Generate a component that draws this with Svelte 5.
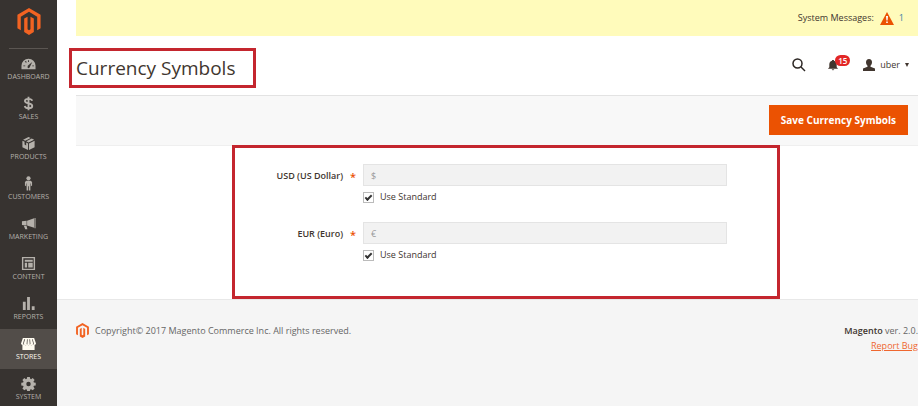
<script lang="ts">
	interface MenuItem {
		id: string;
		label: string;
		active?: boolean;
	}

	interface Currency {
		code: string;
		name: string;
		symbol: string;
		standard: boolean;
	}

	const menu: MenuItem[] = [
		{ id: 'dashboard', label: 'Dashboard' },
		{ id: 'sales', label: 'Sales' },
		{ id: 'products', label: 'Products' },
		{ id: 'customers', label: 'Customers' },
		{ id: 'marketing', label: 'Marketing' },
		{ id: 'content', label: 'Content' },
		{ id: 'reports', label: 'Reports' },
		{ id: 'stores', label: 'Stores', active: true },
		{ id: 'system', label: 'System' }
	];

	let currencies: Currency[] = $state([
		{ code: 'USD', name: 'US Dollar', symbol: '$', standard: true },
		{ code: 'EUR', name: 'Euro', symbol: '€', standard: true }
	]);
</script>

{#snippet logo()}
	<svg class="logo" viewBox="0 0 24 28" aria-hidden="true">
		<path d="M12 0 24 7v14l-3.500 2V9L12 4 3.500 9v14L0 21V7z" />
		<path d="M7 11l3.500-2v13l1.500 1 1.500-1V9L17 11v14l-5 3-5-3z" />
	</svg>
{/snippet}

{#snippet icon(id: string)}
	<svg class="icon" viewBox="0 0 16 16" aria-hidden="true">
		{#if id === 'dashboard'}
			<path
				fill-rule="evenodd"
				d="M.5 14V10.500a7.500 7.500 0 0 1 15 0V14zM7 12.300a1.300 1.300 0 0 0 2 .3L12 6.300 7.200 10.500zM2.500 10h2v1h-2zM4 6l1-.8 1.200 1.200-.8.8zM7.500 4.500h1v2h-1zM12 10h1.800v1H12z"
			/>
		{:else if id === 'sales'}
			<path
				class="line"
				d="M12 5C11.500 3.500 10 3 8 3 5.500 3 4.200 4 4.200 5.300 4.200 8.800 12 7 12 10.600 12 12.200 10.300 13 8 13 5.700 13 4.400 12.200 4 10.600M8 .8v14.400"
			/>
		{:else if id === 'products'}
			<path d="M8 1l2.300 1.100-5.700 3L2.200 4zM11.500 2.600L14 4 8 7 5.700 5.700zM1.500 5l2.300 1.200V9l1.700 1V7l2 1v7l-6-3zM14.500 5v7l-6 3V8z" />
		{:else if id === 'customers'}
			<circle cx="8" cy="2.500" r="2.200" />
			<path d="M5.700 5h4.600l1.500 1.500V10l-1.300.8V8H10v7.500H8.400V11h-.8v4.500H6V8h-.5v2.800L4.200 10V6.500z" />
		{:else if id === 'marketing'}
			<path d="M6.500 5L14 2.500v10L6.500 10zM1 5.500L6 5v5L1 9.500zM3 10.300l3 .4.8 3.500H4.500zM14.500 2h1v11h-1z" />
		{:else if id === 'content'}
			<path fill-rule="evenodd" d="M1 1h14v14H1zM2.500 2.500v11h11v-11zM4 4h8.500v2H4zM4 7.300h2.500v5H4zM7.700 7.300h4.800v5H7.700z" />
		{:else if id === 'reports'}
			<path d="M2 6h3v9H2zM6.500 1h3v14h-3zM11.500 11h3v4h-3z" />
		{:else if id === 'stores'}
			<path
				fill-rule="evenodd"
				d="M2 2h12l2 6c0 1.500-2 2-3 1-1 1-3 1-3.500 0-.5 1-2.500 1-3 0C6 10 4 10 3 9c-1 1-3 .5-3-1zM3.400 3.500L2 8.500h.8l1.600-5zM6.400 3.500L6 8.500h.8l.4-5zM8.900 3.500l.4 5h.8l-.4-5zM11.700 3.500l1.400 5h.8l-1.400-5zM1.500 9.500h13v5.500h-13z"
			/>
		{:else if id === 'system'}
			<path
				fill-rule="evenodd"
				d="M6.600 1h2.800l.4 2 1 .4 1.700-1.200 2 2-1.200 1.700.4 1 2 .4v2.800l-2 .4-.4 1 1.200 1.700-2 2-1.700-1.200-1 .4-.4 2H6.600l-.4-2-1-.4-1.700 1.200-2-2 1.200-1.700-.4-1-2-.4V7.300l2-.4.4-1-1.200-1.700 2-2 1.700 1.200 1-.4zM8 6.200a2.400 2.400 0 1 0 0 4.800 2.400 2.400 0 0 0 0-4.800z"
			/>
		{/if}
	</svg>
{/snippet}

<div class="page">
	<nav class="sidebar">
		<a class="brand" href="#home" aria-label="Magento">{@render logo()}</a>
		<ul class="menu">
			{#each menu as item}
				<li>
					<a class="menu-item" class:active={item.active} href="#{item.id}">
						{@render icon(item.id)}
						<span>{item.label}</span>
					</a>
				</li>
			{/each}
		</ul>
	</nav>

	<div class="wrapper">
		<div class="messages">
			<span>System Messages:</span>
			<a class="message-link" href="#messages">
				<svg class="warning" viewBox="0 0 14 13" aria-hidden="true">
					<path d="M7 0l7 13H0z" fill="#eb5202" />
					<path d="M6 4h2l-.4 4.500H6.400zM6.200 9.500h1.600V11H6.200z" fill="#fff" />
				</svg>
				<span>1</span>
			</a>
		</div>

		<header class="header">
			<h1 class="title highlight">Currency Symbols</h1>
			<div class="tools">
				<button class="tool" aria-label="Search">
					<svg class="search" viewBox="0 0 14 14" aria-hidden="true">
						<circle cx="5.500" cy="5.500" r="4.500" />
						<path d="M9 9l4 4" />
					</svg>
				</button>
				<button class="tool bell" aria-label="Notifications">
					<svg viewBox="0 0 12 13" aria-hidden="true">
						<path d="M5 1h2v1c2 .4 3 2 3 4v3l1.500 1.500H.5L2 9V6c0-2 1-3.600 3-4zM4.500 11.200h3L6 12.500z" />
					</svg>
					<span class="badge">15</span>
				</button>
				<button class="tool user">
					<svg viewBox="0 0 12 12" aria-hidden="true">
						<path d="M6 0c2 0 3 1.300 3 3.200C9 5 8 6 7.500 6.700v1.100L12 9.600V12H0V9.600l4.500-1.800V6.700C4 6 3 5 3 3.200 3 1.300 4 0 6 0z" />
					</svg>
					<span>uber</span>
					<span class="caret"></span>
				</button>
			</div>
		</header>

		<div class="actions">
			<button class="primary">Save Currency Symbols</button>
		</div>

		<form class="symbols highlight">
			{#each currencies as currency}
				<div class="field">
					<label class="label" for="symbol-{currency.code}">{currency.code} ({currency.name})</label>
					<div class="control">
						<input
							class="text"
							type="text"
							id="symbol-{currency.code}"
							bind:value={currency.symbol}
							disabled={currency.standard}
						/>
						<label class="choice">
							<input type="checkbox" bind:checked={currency.standard} />
							<span>Use Standard</span>
						</label>
					</div>
				</div>
			{/each}
		</form>

		<footer class="footer">
			<div class="copyright">
				{@render logo()}
				<span>Copyright© 2017 Magento Commerce Inc. All rights reserved.</span>
			</div>
			<div class="version">
				<div><strong>Magento</strong> ver. 2.0.</div>
				<a href="#bugs">Report Bug</a>
			</div>
		</footer>
	</div>
</div>

<style>
	:global(body) {
		margin: 0;
		background: #fff;
	}

	.page {
		display: flex;
		height: 100vh;
		overflow: hidden;
		color: #41362f;
		font-family: 'Open Sans', 'Noto Sans', sans-serif;
		font-size: 9px;
		line-height: 14px;
	}

	button {
		border: 0;
		font: inherit;
		cursor: pointer;
	}

	.highlight {
		border: 3px solid #c4262e;
	}

	.logo {
		fill: #f26322;
	}

	/* sidebar */
	.sidebar {
		flex: 0 0 57px;
		background: #373330;
	}
	.brand {
		display: flex;
		justify-content: center;
		height: 40px;
		margin: 0 9px;
		padding-top: 8px;
		border-bottom: 1px solid #5b5652;
	}
	.brand .logo {
		width: 24px;
		height: 27px;
	}
	.menu {
		margin: 0;
		padding: 0;
		list-style: none;
	}
	.menu-item {
		display: flex;
		flex-direction: column;
		align-items: center;
		height: 33px;
		padding-top: 7px;
		color: #b5b1ab;
		font-size: 7px;
		line-height: 12px;
		text-decoration: none;
		text-transform: uppercase;
	}
	.menu-item.active {
		background: #524d49;
		color: #fffbf0;
	}
	.icon {
		width: 15px;
		height: 15px;
		fill: currentColor;
	}
	.icon .line {
		fill: none;
		stroke: currentColor;
		stroke-width: 2;
	}

	/* top */
	.wrapper {
		flex: 1;
		display: flex;
		flex-direction: column;
		min-width: 0;
	}
	.messages {
		display: flex;
		justify-content: flex-end;
		align-items: center;
		gap: 6px;
		height: 36px;
		margin-left: 19px;
		padding-right: 14px;
		background: #fffbbb;
	}
	.message-link {
		display: flex;
		align-items: center;
		gap: 5px;
		color: #3b7fa8;
		text-decoration: none;
	}
	.warning {
		width: 14px;
		height: 13px;
	}
	.header {
		display: flex;
		justify-content: space-between;
		align-items: center;
		height: 59px;
		padding: 0 9px 0 12px;
	}
	.title {
		margin: 4px 0 0;
		padding: 0 18px 0 4px;
		font-size: 19px;
		font-weight: 400;
		line-height: 34px;
	}
	.tools {
		display: flex;
		align-items: center;
		gap: 12px;
		margin-bottom: 2px;
	}
	.tool {
		display: flex;
		align-items: center;
		padding: 0;
		background: none;
		color: #41362f;
	}
	.tool svg {
		width: 12px;
		height: 12px;
		fill: #41362f;
	}
	.tool .search {
		width: 14px;
		height: 14px;
		fill: none;
		stroke: #2b2522;
		stroke-width: 1.5;
	}
	.bell {
		position: relative;
		margin: 0 12px 0 9px;
	}
	.badge {
		position: absolute;
		top: -4px;
		left: 8px;
		padding: 0 3px;
		border-radius: 6px;
		background: #e22626;
		color: #fff;
		font-size: 8px;
		font-weight: 600;
		line-height: 11px;
	}
	.user {
		gap: 5px;
	}
	.caret {
		border: 2px solid transparent;
		border-top: 4px solid #41362f;
		border-bottom: 0;
	}
	.actions {
		display: flex;
		justify-content: flex-end;
		margin-left: 19px;
		padding: 9px 10px 10px;
		border-top: 1px solid #e3e3e3;
		border-bottom: 1px solid #efefef;
		background: #f8f8f8;
	}
	.primary {
		padding: 0 12px;
		background: #eb5202;
		color: #fff;
		font-size: 10px;
		font-weight: 700;
		line-height: 30px;
	}

	/* form */
	.symbols {
		margin: -1px 138px 0 175px;
		padding: 16px 50px 33px 0;
	}
	.field {
		display: flex;
		gap: 20px;
	}
	.field + .field {
		margin-top: 17px;
	}
	.label {
		position: relative;
		flex: 0 0 108px;
		font-weight: 600;
		line-height: 24px;
		text-align: right;
	}
	.label::after {
		content: '*';
		position: absolute;
		left: 100%;
		margin-left: 7px;
		color: #eb5202;
		font-size: 11px;
		line-height: 26px;
	}
	.control {
		flex: 1;
		display: flex;
		flex-direction: column;
		align-items: flex-start;
		gap: 3px;
	}
	.text {
		width: 100%;
		height: 22px;
		padding: 0 7px;
		border: 1px solid #e4e4e4;
		background: #fff;
		box-sizing: border-box;
		color: #41362f;
		font: inherit;
	}
	.text:disabled {
		background: #f2f2f2;
		color: #999;
	}
	.choice {
		display: flex;
		align-items: center;
		gap: 6px;
		line-height: 16px;
	}
	.choice input {
		appearance: none;
		width: 11px;
		height: 11px;
		margin: 0;
		border: 1px solid #bbb;
		background: #fff;
		box-sizing: border-box;
	}
	.choice input:checked::before {
		content: '';
		display: block;
		width: 5px;
		height: 2px;
		margin: 2px 0 0 1px;
		border: solid #333;
		border-width: 0 0 2px 2px;
		transform: rotate(-45deg);
	}

	/* footer */
	.footer {
		flex: 1;
		display: flex;
		justify-content: space-between;
		align-items: flex-start;
		padding: 23px 0 0 19px;
		border-top: 1px solid #e8e8e8;
		background: #f5f5f5;
		color: #666;
	}
	.copyright {
		display: flex;
		align-items: center;
		gap: 6px;
	}
	.copyright .logo {
		width: 13px;
		height: 15px;
	}
	.version {
		line-height: 15px;
		text-align: right;
	}
	.version strong {
		font-weight: 600;
		color: #41362f;
	}
	.version a {
		color: #ef672f;
	}
</style>
